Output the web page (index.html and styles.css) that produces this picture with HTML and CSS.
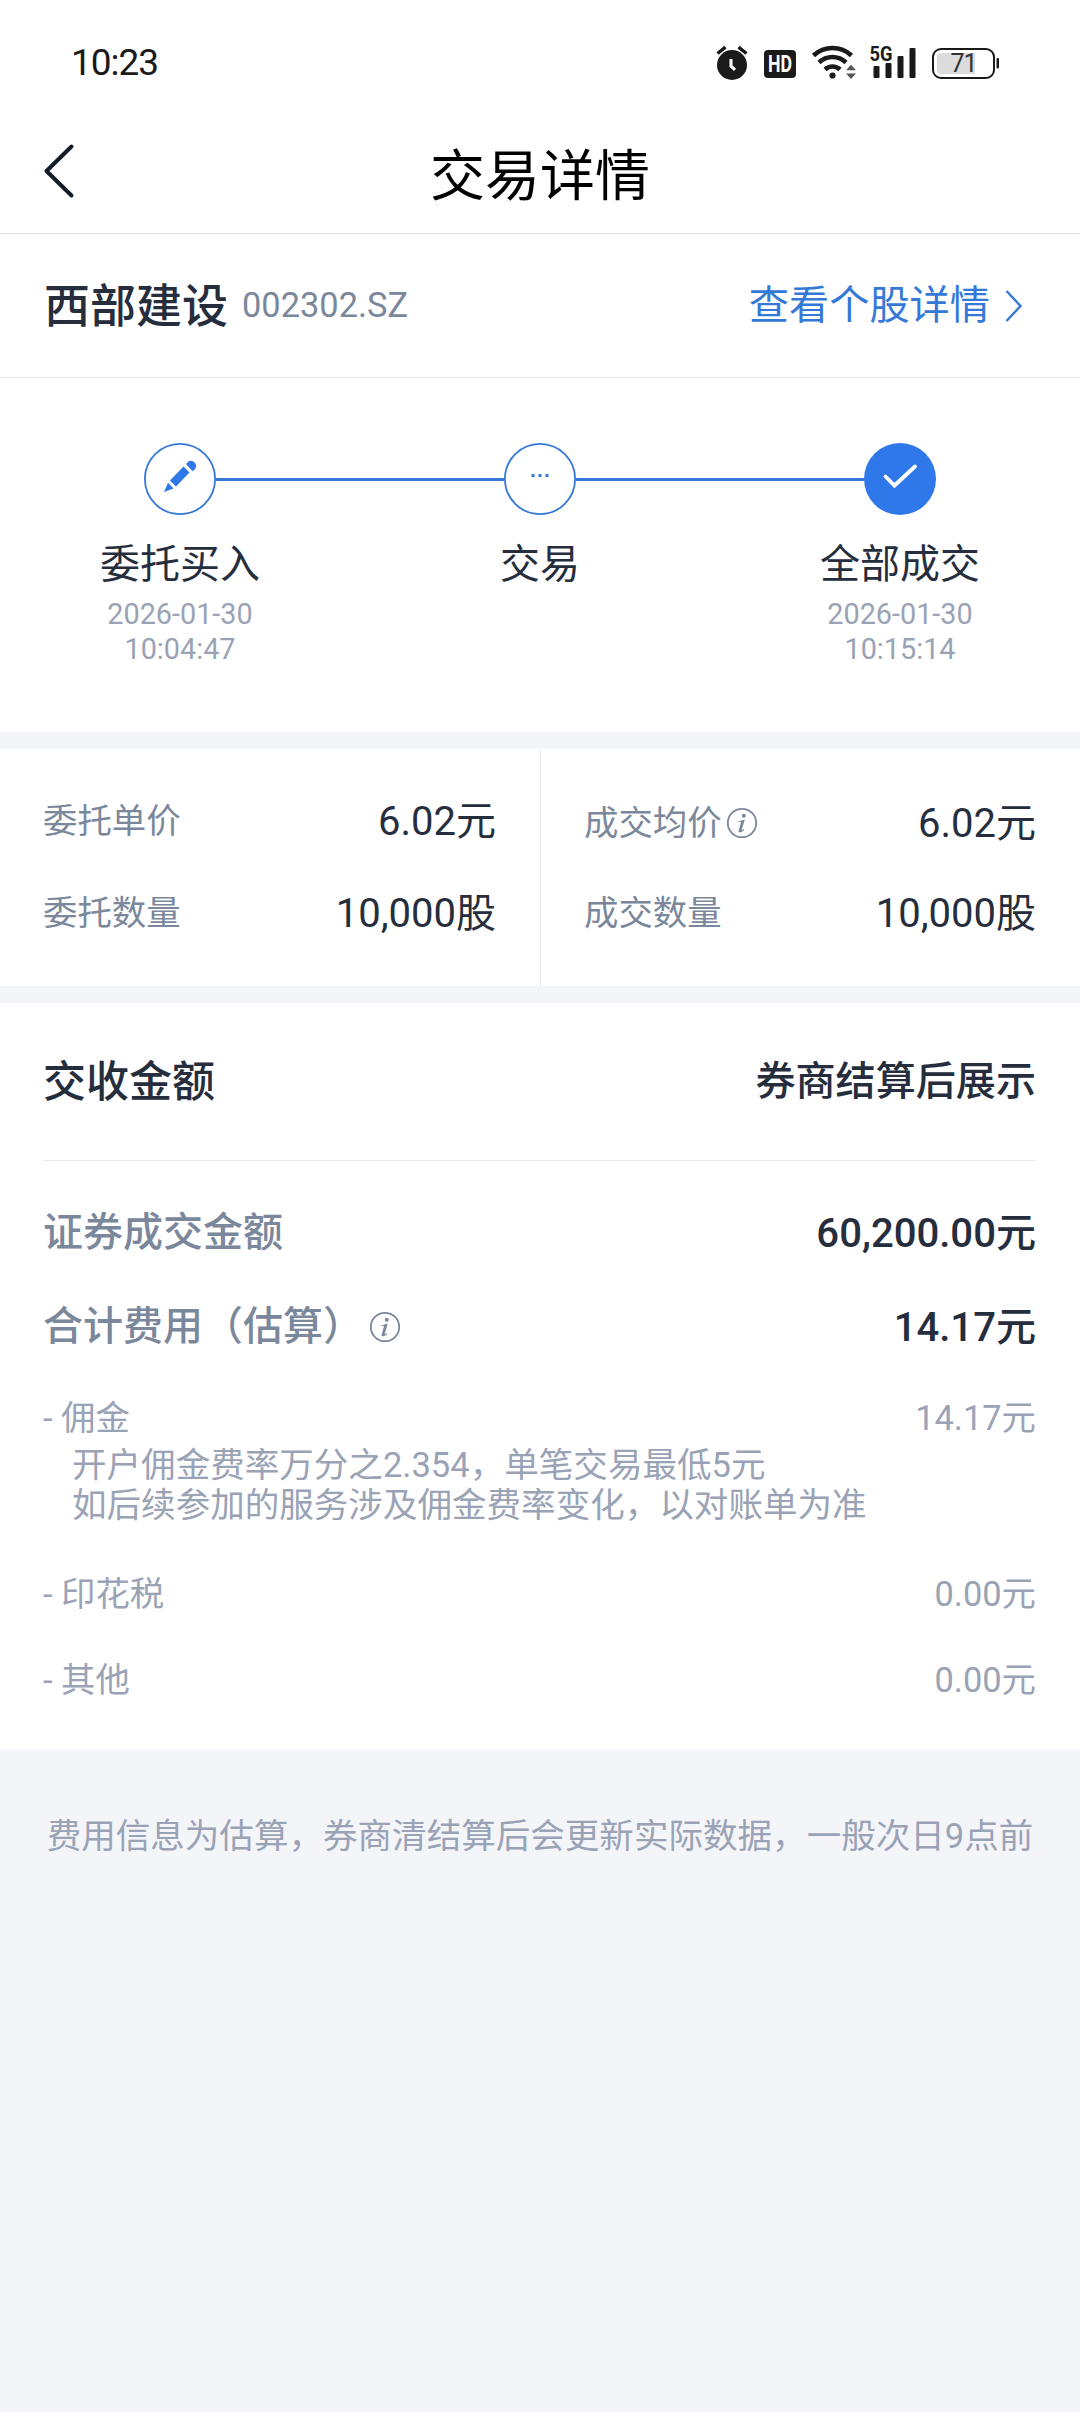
FILE: index.html
```html
<!DOCTYPE html>
<html lang="zh-CN">
<head>
<meta charset="utf-8">
<meta name="viewport" content="width=device-width">
<title>交易详情</title>
<link rel="stylesheet" href="styles.css">
</head>
<body>
<div class="screen">
  <div class="status">
    <span class="time">10:23</span>
    <svg class="status-icons" width="290" height="40" viewBox="710 42 290 40">
      <g fill="#1a1a1a">
        <circle cx="732" cy="64" r="15"/>
        <path d="M717.5 52.5l8-6.3M746.5 52.5l-8-6.3" stroke="#1a1a1a" stroke-width="3.4"/>
        <path d="M731 58v7l4 3.800" fill="none" stroke="#fff" stroke-width="3"/>
        <rect x="764" y="49" width="32" height="28" rx="4"/>
        <path d="M813.500 54.500a28 28 0 0 1 38 0M819 61.500a19.500 19.500 0 0 1 27 0M825 68.500a11 11 0 0 1 15 0" fill="none" stroke="#1a1a1a" stroke-width="4.600"/>
        <circle cx="832.500" cy="74.500" r="3.100"/>
        <path d="M846 69.300l5-5.500 5 5.500zM846 72.500l5 5.500 5-5.500z" fill="#555"/>
        <rect x="873.500" y="65" width="6" height="12" rx="1"/>
        <rect x="885.500" y="62" width="6" height="15" rx="1"/>
        <rect x="897.500" y="55" width="6" height="22" rx="1"/>
        <rect x="909.500" y="47" width="6" height="30" rx="1"/>
        <rect x="933" y="48" width="61" height="29" rx="8" fill="none" stroke="#1a1a1a" stroke-width="2"/>
        <path d="M941 52h34v21h-34a4 4 0 0 1-4-4v-13a4 4 0 0 1 4-4z" fill="#dcdcdc"/>
        <rect x="996.500" y="57" width="2.500" height="10.500" rx="1"/>
      </g>
      <text x="780" y="70.500" class="t-hd" textLength="24" lengthAdjust="spacingAndGlyphs">HD</text>
      <text x="881" y="60" class="t-5g" textLength="23" lengthAdjust="spacingAndGlyphs">5G</text>
      <text x="963.500" y="71" class="t-bat">71</text>
    </svg>
  </div>
  <header class="nav">
    <svg class="back" width="32" height="56" viewBox="43 143 32 56"><path d="M71.500 146.500L46.500 171L71.500 195.500" fill="none" stroke="#141c28" stroke-width="4" stroke-linecap="round" stroke-linejoin="round"/></svg>
    <h1>交易详情</h1>
  </header>
  <section class="stock">
    <b class="name">西部建设</b><span class="code">002302.SZ</span>
    <a class="link">查看个股详情<svg width="18" height="34" viewBox="0 0 18 34"><path d="M1.500 2L15.500 17L1.500 32" fill="none" stroke="#3478d8" stroke-width="2.400"/></svg></a>
  </section>
  <section class="steps">
    <div class="step">
      <div class="track"><i class="line off"></i><svg class="dot" width="72" height="72" viewBox="0 0 72 72"><circle cx="36" cy="36" r="35.100" fill="#fff" stroke="#3478d8" stroke-width="1.800"/><g fill="#2f78ea"><path d="M26 37.500L39.500 23.500L45.500 29.500L32 43.500z"/><path d="M24 39.800L29.500 45.500L20 49z"/><path d="M42 21l2-2a5 5 0 0 1 7 7l-2.500 2.200z"/></g></svg><i class="line"></i></div>
      <div class="label">委托买入</div>
      <div class="date">2026-01-30<br>10:04:47</div>
    </div>
    <div class="step">
      <div class="track"><i class="line"></i><svg class="dot" width="72" height="72" viewBox="0 0 72 72"><circle cx="36" cy="36" r="35.100" fill="#fff" stroke="#3478d8" stroke-width="1.800"/><path d="M27.500 31h3v3h-3zM34.500 31h3v3h-3zM41.500 31h3v3h-3z" fill="#3478d8"/></svg><i class="line"></i></div>
      <div class="label">交易</div>
    </div>
    <div class="step">
      <div class="track"><i class="line"></i><svg class="dot" width="72" height="72" viewBox="0 0 72 72"><circle cx="36" cy="36" r="36" fill="#2f78ea"/><path d="M21.500 33.500L30.500 42.500L51 23.500" fill="none" stroke="#fff" stroke-width="3.800" stroke-linecap="round"/></svg><i class="line off"></i></div>
      <div class="label">全部成交</div>
      <div class="date">2026-01-30<br>10:15:14</div>
    </div>
  </section>
  <section class="quote">
    <div class="col">
      <div class="pair"><span class="key">委托单价</span><span class="val">6.02元</span></div>
      <div class="pair"><span class="key">委托数量</span><span class="val">10,000股</span></div>
    </div>
    <div class="col right">
      <div class="pair first"><span class="key">成交均价<svg class="info near" width="32" height="32" viewBox="0 0 32 32"><circle cx="16" cy="16" r="14.200"/><path d="M17.800 6.800a2 2 0 1 1 0 4 2 2 0 0 1 0-4zM12 14.200c2.500-.3 4.500-1 6.800-1.800l-3 10.200c-.2.900.3 1 1.900-.7l.7.500c-2.200 3.200-6.500 4-5.700 1l2.200-7.700c.3-1.200-1.200-1-3-.7z"/></svg></span><span class="val">6.02元</span></div>
      <div class="pair"><span class="key">成交数量</span><span class="val">10,000股</span></div>
    </div>
  </section>
  <section class="settle">
    <div class="row head"><span class="title">交收金额</span><span class="amount">券商结算后展示</span></div>
    <div class="row total"><span>证券成交金额</span><span class="amount">60,200.00元</span></div>
    <div class="row total"><span>合计费用（估算）<svg class="info" width="32" height="32" viewBox="0 0 32 32"><circle cx="16" cy="16" r="14.200"/><path d="M17.800 6.800a2 2 0 1 1 0 4 2 2 0 0 1 0-4zM12 14.200c2.500-.3 4.500-1 6.800-1.800l-3 10.200c-.2.900.3 1 1.900-.7l.7.500c-2.200 3.200-6.500 4-5.700 1l2.200-7.700c.3-1.200-1.200-1-3-.7z"/></svg></span><span class="amount">14.17元</span></div>
    <div class="row fee brokerage"><span>- 佣金</span><span>14.17元</span></div>
    <p class="note">开户佣金费率万分之2.354，单笔交易最低5元<br>如后续参加的服务涉及佣金费率变化，以对账单为准</p>
    <div class="row fee"><span>- 印花税</span><span>0.00元</span></div>
    <div class="row fee"><span>- 其他</span><span>0.00元</span></div>
  </section>
  <p class="hint">费用信息为估算，券商清结算后会更新实际数据，一般次日9点前</p>
</div>
</body>
</html>
```
FILE: styles.css
```css
* { box-sizing: border-box; margin: 0; padding: 0; }
body {
  background: #f4f5f9;
  color: #262e3e;
  font-family: Roboto, "Noto Sans CJK SC", sans-serif;
}
.screen { width: 1080px; height: 2412px; overflow: hidden; }
svg { display: block; flex: none; }
.status {
  height: 112px;
  padding: 14px 80px 0 71px;
  display: flex;
  align-items: center;
  justify-content: space-between;
  background: #fff;
}
.time { font-size: 37px; line-height: 44px; letter-spacing: -1px; color: #1a1a1a; }
.t-hd { font: 700 23px Roboto, sans-serif; fill: #fff; text-anchor: middle; }
.t-5g { font: 700 20px Roboto, sans-serif; fill: #1a1a1a; text-anchor: middle; }
.t-bat { font: 400 25px Roboto, sans-serif; fill: #333; text-anchor: middle; letter-spacing: -1px; }
.nav {
  height: 122px;
  padding: 0 43px;
  display: grid;
  grid-template-columns: 32px 1fr 32px;
  align-items: center;
  text-align: center;
  background: #fff;
  border-bottom: 1px solid #e2e2e4;
}
.back { margin-bottom: 3px; }
.nav h1 { font-size: 55px; font-weight: 400; line-height: 64px; color: #000; padding-top: 7px; }
.stock {
  height: 144px;
  padding: 0 57px 0 44px;
  display: flex;
  align-items: center;
  background: #fff;
  border-bottom: 1px solid #e8e8ea;
}
.name { font-size: 46px; font-weight: 500; line-height: 60px; }
.code { margin: 0 0 2px 14px; font-size: 34.400px; line-height: 44px; color: #7b879b; }
.link { margin-left: auto; display: flex; align-items: center; gap: 15px; font-size: 40.200px; line-height: 54px; color: #3478d8; padding-top: 1px; }
.steps { height: 354px; padding-top: 65px; display: grid; grid-template-columns: repeat(3, 360px); background: #fff; }
.step { text-align: center; }
.track { display: flex; align-items: center; height: 72px; }
.line { flex: 1; height: 3px; background: #3478d8; }
.line.off { background: none; }
.label { margin-top: 23px; font-size: 40px; line-height: 54px; }
.date { margin-top: 5px; font-size: 28.800px; line-height: 35px; color: #9aa3b5; }
.quote {
  height: 271px;
  border-top: 17px solid #f4f5f9;
  border-bottom: 17px solid #f4f5f9;
  display: grid;
  grid-template-columns: 540px 540px;
  background: #fff;
}
.col { padding: 45px 44px 0 43px; }
.col.right { border-left: 1px solid #e8e8ea; padding-left: 43px; }
.pair { height: 54px; margin-bottom: 38px; display: flex; align-items: center; justify-content: space-between; }
.pair.first { margin: 2px 0 36px; }
.key { display: flex; align-items: center; font-size: 34.400px; line-height: 46px; color: #7b879b; }
.val { padding-top: 1px; font-size: 40px; line-height: 54px; }
.info { margin-left: 6px; }
.info.near { margin-left: 4px; }
.info circle { fill: none; stroke: #7b879b; stroke-width: 1.800; }
.info path { fill: #7b879b; }
.settle { height: 747px; padding: 0 44px 0 43px; background: #fff; }
.row { display: flex; align-items: center; justify-content: space-between; }
.row > span { display: flex; align-items: center; }
.head { height: 158px; border-bottom: 1px solid #e8e8ea; }
.title { font-size: 43px; font-weight: 500; line-height: 58px; }
.amount { padding-top: 1px; font-size: 40.100px; font-weight: 500; line-height: 54px; color: #262e3e; }
.total { height: 94px; font-size: 40px; font-weight: 500; line-height: 54px; color: #7b879b; }
.head + .total { margin-top: 25px; }
.fee { height: 86px; font-size: 34.400px; line-height: 46px; color: #9aa3b5; }
.brokerage { height: 46px; margin-top: 21px; }
.note { margin: 4px 0 26px 29px; font-size: 34.560px; line-height: 40px; color: #9aa3b5; white-space: nowrap; }
.hint { margin-top: 63px; text-align: center; font-size: 34.560px; line-height: 46px; color: #9aa3b5; white-space: nowrap; }
```
